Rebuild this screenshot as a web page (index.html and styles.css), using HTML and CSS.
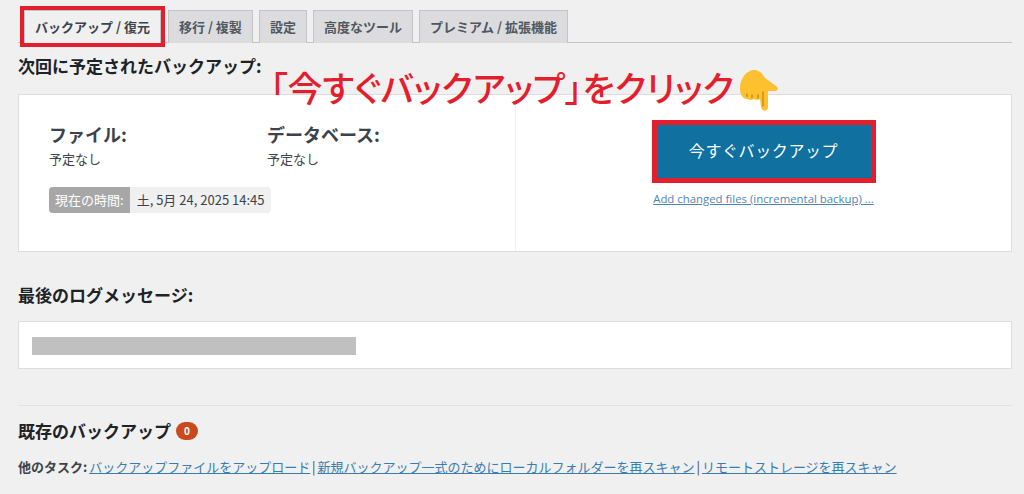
FILE: index.html
```html
<!DOCTYPE html>
<html lang="ja">
<head>
    <meta charset="UTF-8">
    <title>バックアップ / 復元</title>
    <link rel="stylesheet" href="styles.css">
</head>
<body>
    <div class="page">
        <div class="tabs">
            <a class="tab active">バックアップ / 復元</a>
            <a class="tab">移行 / 複製</a>
            <a class="tab">設定</a>
            <a class="tab">高度なツール</a>
            <a class="tab">プレミアム / 拡張機能</a>
        </div>

        <h2 class="next-title">次回に予定されたバックアップ:</h2>

        <div class="card schedule">
            <div class="schedule-left">
                <div class="schedule-cols">
                    <div class="schedule-col">
                        <h3>ファイル:</h3>
                        <p>予定なし</p>
                    </div>
                    <div class="schedule-col">
                        <h3>データベース:</h3>
                        <p>予定なし</p>
                    </div>
                </div>
                <div class="time-pill">
                    <span class="time-label">現在の時間:</span>
                    <span class="time-value">土, 5月 24, 2025 14:45</span>
                </div>
            </div>
            <div class="schedule-right">
                <button class="backup-btn">今すぐバックアップ</button>
                <a class="inc-link">Add changed files (incremental backup) ...</a>
            </div>
        </div>

        <h2 class="log-title">最後のログメッセージ:</h2>
        <div class="card log-box">
            <div class="log-mask"></div>
        </div>

        <hr class="divider">

        <h2 class="existing-title">既存のバックアップ <span class="count">0</span></h2>
        <p class="tasks"><b>他のタスク:</b> <a>バックアップファイルをアップロード</a> | <a>新規バックアップ一式のためにローカルフォルダーを再スキャン</a> | <a>リモートストレージを再スキャン</a></p>
    </div>

    <!-- annotation drawn over the screenshot -->
    <div class="callout">
        <span>「今すぐバックアップ」をクリック</span>
        <svg class="hand" width="38" height="41" viewBox="0 0 38 41">
            <path fill="#fdc02f" d="M0 18C0 8 7 0 14 0c5 0 8 3 11 8l11 8c3 2 2 5-1 5l-7 0 0 16c0 5-6 5-7 0l-1-8-3 1-3-1-3 1-4-1C3 29 0 25 0 18z"/>
            <path fill="none" stroke="#c98a12" stroke-width="1.4" stroke-linecap="round" d="M23 22l0 14M18 25v3M12 25v2.500M7 24v2.500"/>
        </svg>
    </div>
</body>
</html>
```

FILE: styles.css
```css
* {
    margin: 0;
    padding: 0;
    box-sizing: border-box;
}

body {
    font-family: "Noto Sans CJK JP", "Noto Sans", sans-serif;
    font-size: 13px;
    color: #3c434a;
    background: #f0f0f1;
    width: 1024px;
    height: 494px;
    overflow: hidden;
    position: relative;
}

.page {
    padding: 10px 12px 0 18px;
}

.tabs {
    display: flex;
    gap: 6px;
    height: 33px;
    padding-left: 6px;
    border-bottom: 1px solid #c3c4c7;
}

.tab {
    height: 33px;
    padding: 0 10px;
    font-size: 13px;
    font-weight: 700;
    line-height: 32px;
    color: #50575e;
    background: #dcdcde;
    border: 1px solid #c3c4c7;
    border-bottom: 0;
}

.tab.active {
    color: #3c434a;
    background: #f0f0f1;
    outline: 4px solid #e31e2d;
    margin-right: 1px;
}

h2 {
    font-size: 17px;
    font-weight: 700;
    color: #1d2327;
    line-height: 24px;
}

.next-title {
    margin-top: 11px;
}

.card {
    background: #fff;
    border: 1px solid #dcdcde;
}

.schedule {
    display: flex;
    height: 158px;
    margin-top: 16px;
}

.schedule-left {
    width: 497px;
    padding: 27px 0 0 30px;
    border-right: 1px solid #f0f0f1;
}

.schedule-cols {
    display: flex;
}

.schedule-col {
    width: 218px;
}

.schedule-col h3 {
    font-size: 18px;
    font-weight: 700;
    line-height: 24px;
    color: #3c434a;
}

.schedule-col p {
    font-size: 13px;
    line-height: 18px;
    margin-top: 4px;
}

.time-pill {
    display: inline-flex;
    height: 26px;
    margin-top: 19px;
    font-size: 13px;
    line-height: 26px;
    background: #f0f0f1;
    border-radius: 4px;
    overflow: hidden;
}

.time-label {
    padding: 0 6px;
    color: #fff;
    background: #a7a7a7;
}

.time-value {
    padding: 0 7px;
}

.schedule-right {
    flex: 1;
    display: flex;
    flex-direction: column;
    align-items: center;
    padding: 25px 0 0 0;
}

.backup-btn {
    width: 224px;
    height: 63px;
    padding-bottom: 3px;
    font-family: inherit;
    font-size: 16px;
    color: #fff;
    background: #10709f;
    border: 5px solid #e31e2d;
    letter-spacing: 0.6px;
}

.inc-link {
    margin-top: 7px;
    font-size: 11.4px;
    font-family: "Open Sans", "Noto Sans", sans-serif;
    line-height: 18px;
    color: #4f86b0;
    text-decoration: underline;
}

.log-title {
    margin-top: 31px;
}

.log-box {
    height: 48px;
    margin-top: 14px;
    padding: 15px 13px;
}

.log-mask {
    width: 324px;
    height: 18px;
    background: #c0c0c0;
}

.divider {
    margin-top: 36px;
    border: 0;
    border-top: 1px solid #e2e2e4;
}

.existing-title {
    margin-top: 13px;
    display: flex;
    align-items: center;
    gap: 5px;
}

.count {
    width: 22px;
    height: 18px;
    font-size: 10px;
    line-height: 18px;
    text-align: center;
    color: #fff;
    background: #ca4a1f;
    border-radius: 9px;
}

.tasks {
    margin-top: 14px;
    font-size: 13px;
    line-height: 20px;
    word-spacing: -1px;
}

.tasks b {
    color: #3c434a;
}

.tasks a {
    color: #3b7cae;
    text-decoration: underline;
}

/* red note on top of the page */
.callout {
    position: absolute;
    left: 270px;
    top: 62px;
    display: flex;
    align-items: center;
    gap: 6px;
    font-size: 35px;
    font-weight: 500;
    line-height: 50px;
    color: #e31e2d;
    font-feature-settings: "palt";
    white-space: nowrap;
}

.hand {
    margin-top: 6px;
}
```
